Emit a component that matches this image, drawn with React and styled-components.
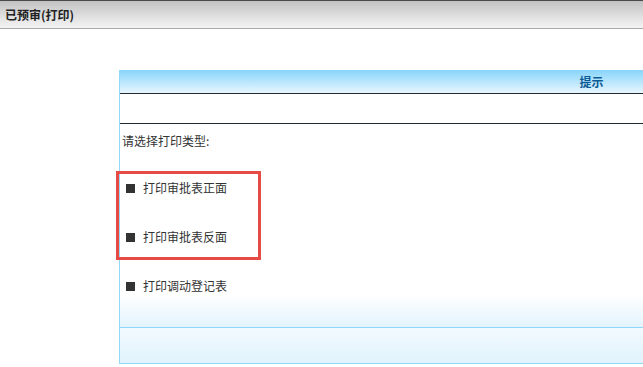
import React from "react";
import styled, { createGlobalStyle } from "styled-components";

const GlobalStyle = createGlobalStyle`
  html, body {
    margin: 0;
    padding: 0;
    background: #fff;
    overflow: hidden;
  }
  body {
    font-family: "Noto Sans CJK SC", "Liberation Sans", sans-serif;
    font-size: 12px;
    color: #333;
  }
`;

const Page = styled.div`
  width: 643px;
  height: 367px;
  position: relative;
  overflow: hidden;
`;

const TitleBar = styled.div`
  height: 27px;
  border-top: 1px solid #4a4a4a;
  border-bottom: 1px solid #a9a9a9;
  background: linear-gradient(#c2c2c2, #e6e6e6 70%, #f3f3f3);
  display: flex;
  align-items: center;
  padding-left: 5px;
  font-weight: bold;
  font-size: 12px;
  color: #222;
`;

const Content = styled.div`
  padding: 41px 0 0 119px;
`;

const Panel = styled.div`
  width: 943px;
  border-left: 1px solid #95d9f8;
`;

const Header = styled.div`
  height: 23px;
  background: linear-gradient(#88d5fb, #e8f6fe);
  border-bottom: 1px solid #1f2b31;
  display: flex;
  align-items: center;
  justify-content: center;
  font-weight: bold;
  color: #0b5c94;
  font-size: 12px;
`;

const BlankRow = styled.div`
  height: 29px;
  border-bottom: 1px solid #1f2b31;
`;

const Body = styled.div`
  display: flex;
  flex-direction: column;
  padding-top: 8px;
`;

const Prompt = styled.div`
  line-height: 18px;
  padding-left: 2px;
  margin-bottom: 29px;
`;

const Options = styled.div`
  display: flex;
  flex-direction: column;
  gap: 31px;
  padding-left: 6px;
`;

const Option = styled.div`
  display: flex;
  align-items: center;
  gap: 8px;
  line-height: 18px;
`;

const Bullet = styled.span`
  width: 9px;
  height: 9px;
  background: #333;
`;

const FadeStrip = styled.div`
  height: 32px;
  background: linear-gradient(#ffffff, #e3f4fd);
  border-bottom: 1px solid #8fd8fb;
`;

const FootRow = styled.div`
  height: 35px;
  background: linear-gradient(#f2fafe, #e1f3fd);
  border-bottom: 1px solid #8fd8fb;
`;

const Highlight = styled.div`
  position: absolute;
  left: 116px;
  top: 171px;
  width: 139px;
  height: 83px;
  border: 3px solid #e64b45;
`;

const options = ["打印审批表正面", "打印审批表反面", "打印调动登记表"];

export default function App() {
  return (
    <Page>
      <GlobalStyle />
      <TitleBar>已预审(打印)</TitleBar>
      <Content>
        <Panel>
          <Header>提示</Header>
          <BlankRow />
          <Body>
            <Prompt>请选择打印类型:</Prompt>
            <Options>
              {options.map((o) => (
                <Option key={o}>
                  <Bullet />
                  {o}
                </Option>
              ))}
            </Options>
            <FadeStrip />
            <FootRow />
          </Body>
        </Panel>
      </Content>
      <Highlight />
    </Page>
  );
}
